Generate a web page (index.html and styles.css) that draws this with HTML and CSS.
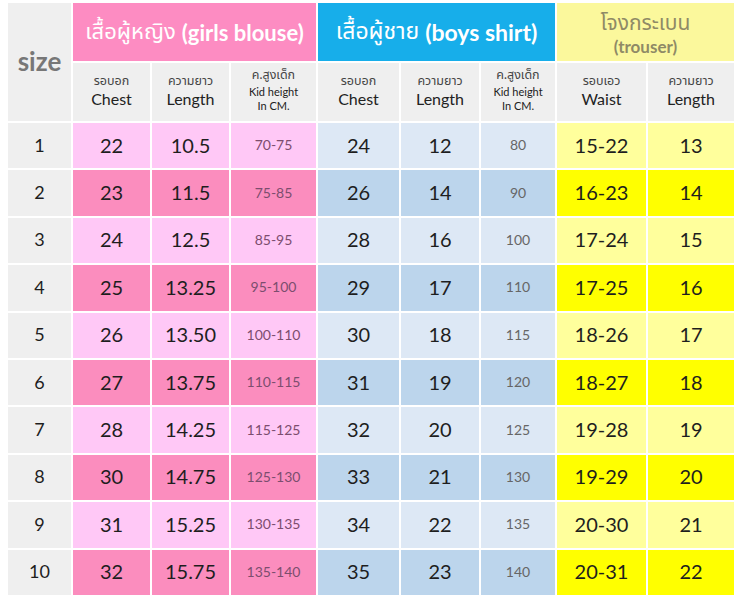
FILE: index.html
```html
<!DOCTYPE html>
<html>
<head>
<meta charset="utf-8">
<link rel="stylesheet" href="styles.css">
</head>
<body>
<div class="chart">
  <div class="size-head">size</div>
  <div class="grp grp-girls"><span class="th">เสื้อผู้หญิง</span> <b>(girls blouse)</b></div>
  <div class="grp grp-boys"><span class="th">เสื้อผู้ชาย</span> <b>(boys shirt)</b></div>
  <div class="grp grp-tr"><span class="th">โจงกระเบน</span><b>(trouser)</b></div>

  <div class="sub"><span class="th-s">รอบอก</span><span class="en">Chest</span></div>
  <div class="sub"><span class="th-s">ความยาว</span><span class="en">Length</span></div>
  <div class="sub"><span class="th-s">ค.สูงเด็ก</span><span class="en-s">Kid height<br>In CM.</span></div>
  <div class="sub"><span class="th-s">รอบอก</span><span class="en">Chest</span></div>
  <div class="sub"><span class="th-s">ความยาว</span><span class="en">Length</span></div>
  <div class="sub"><span class="th-s">ค.สูงเด็ก</span><span class="en-s">Kid height<br>In CM.</span></div>
  <div class="sub"><span class="th-s">รอบเอว</span><span class="en">Waist</span></div>
  <div class="sub"><span class="th-s">ความยาว</span><span class="en">Length</span></div>

  <div class="c sz">1</div><div class="c pk-l">22</div><div class="c pk-l">10.5</div><div class="c pk-l kh">70-75</div><div class="c bl-l">24</div><div class="c bl-l">12</div><div class="c bl-l kb">80</div><div class="c ye-l">15-22</div><div class="c ye-l">13</div>
  <div class="c sz">2</div><div class="c pk-d">23</div><div class="c pk-d">11.5</div><div class="c pk-d kh">75-85</div><div class="c bl-d">26</div><div class="c bl-d">14</div><div class="c bl-d kb">90</div><div class="c ye-d">16-23</div><div class="c ye-d">14</div>
  <div class="c sz">3</div><div class="c pk-l">24</div><div class="c pk-l">12.5</div><div class="c pk-l kh">85-95</div><div class="c bl-l">28</div><div class="c bl-l">16</div><div class="c bl-l kb">100</div><div class="c ye-l">17-24</div><div class="c ye-l">15</div>
  <div class="c sz">4</div><div class="c pk-d">25</div><div class="c pk-d">13.25</div><div class="c pk-d kh">95-100</div><div class="c bl-d">29</div><div class="c bl-d">17</div><div class="c bl-d kb">110</div><div class="c ye-d">17-25</div><div class="c ye-d">16</div>
  <div class="c sz">5</div><div class="c pk-l">26</div><div class="c pk-l">13.50</div><div class="c pk-l kh">100-110</div><div class="c bl-l">30</div><div class="c bl-l">18</div><div class="c bl-l kb">115</div><div class="c ye-l">18-26</div><div class="c ye-l">17</div>
  <div class="c sz">6</div><div class="c pk-d">27</div><div class="c pk-d">13.75</div><div class="c pk-d kh">110-115</div><div class="c bl-d">31</div><div class="c bl-d">19</div><div class="c bl-d kb">120</div><div class="c ye-d">18-27</div><div class="c ye-d">18</div>
  <div class="c sz">7</div><div class="c pk-l">28</div><div class="c pk-l">14.25</div><div class="c pk-l kh">115-125</div><div class="c bl-l">32</div><div class="c bl-l">20</div><div class="c bl-l kb">125</div><div class="c ye-l">19-28</div><div class="c ye-l">19</div>
  <div class="c sz">8</div><div class="c pk-d">30</div><div class="c pk-d">14.75</div><div class="c pk-d kh">125-130</div><div class="c bl-d">33</div><div class="c bl-d">21</div><div class="c bl-d kb">130</div><div class="c ye-d">19-29</div><div class="c ye-d">20</div>
  <div class="c sz">9</div><div class="c pk-l">31</div><div class="c pk-l">15.25</div><div class="c pk-l kh">130-135</div><div class="c bl-l">34</div><div class="c bl-l">22</div><div class="c bl-l kb">135</div><div class="c ye-l">20-30</div><div class="c ye-l">21</div>
  <div class="c sz">10</div><div class="c pk-d">32</div><div class="c pk-d">15.75</div><div class="c pk-d kh">135-140</div><div class="c bl-d">35</div><div class="c bl-d">23</div><div class="c bl-d kb">140</div><div class="c ye-d">20-31</div><div class="c ye-d">22</div>
</div>
</body>
</html>
```
FILE: styles.css
```css
html, body {
  margin: 0;
  padding: 0;
  background: #ffffff;
}
body {
  padding: 3px 0 0 8px;
  font-family: Lato, "Noto Sans Thai", "Noto Sans", "DejaVu Sans", sans-serif;
  color: #1e1e1e;
}
.chart {
  display: grid;
  grid-template-columns: 63px 77px 77px 85px 81px 78px 74px 89px 86px;
  grid-template-rows: 58px 58px repeat(10, 45.4px);
  gap: 2px;
  width: 727px;
}
.size-head {
  grid-row: 1 / 3;
  background: #efefef;
  display: flex;
  align-items: center;
  justify-content: center;
  font-weight: 700;
  font-size: 26px;
  color: #777777;
  padding-bottom: 2px;
}
.grp {
  display: flex;
  align-items: center;
  justify-content: center;
  white-space: nowrap;
}
.grp-girls {
  grid-column: 2 / 5;
  background: #fd8cc2;
  color: #ffffff;
  font-size: 22px;
  gap: 6px;
}
.grp-boys {
  grid-column: 5 / 8;
  background: #17aeea;
  color: #ffffff;
  font-size: 23px;
  gap: 6px;
}
.grp-tr {
  grid-column: 8 / 10;
  background: #fbf89c;
  color: #8f8a66;
  flex-direction: column;
  font-size: 21px;
  line-height: 1.25;
  padding-top: 2px;
}
.grp-tr b {
  font-size: 17px;
}
.sub {
  background: #efefef;
  display: flex;
  flex-direction: column;
  align-items: center;
  justify-content: center;
  text-align: center;
  padding-bottom: 4px;
}
.th-s {
  font-size: 12.5px;
  color: #444444;
  line-height: 1.4;
}
.en {
  font-size: 16px;
  color: #222222;
}
.en-s {
  font-size: 11px;
  color: #222222;
  line-height: 1.3;
  margin-top: 1px;
}
.c {
  display: flex;
  align-items: center;
  justify-content: center;
  font-size: 20px;
  color: #1e1e1e;
  padding-bottom: 2px;
}
.sz {
  background: #efefef;
  font-size: 18px;
}
.pk-l { background: #ffc8f6; }
.pk-d { background: #fb8dbe; }
.bl-l { background: #dde8f5; }
.bl-d { background: #bcd5ec; }
.ye-l { background: #ffff9c; }
.ye-d { background: #ffff00; }
.kh {
  font-size: 14px;
  color: #7c4d6e;
}
.kb {
  font-size: 14px;
  color: #666666;
}
```
